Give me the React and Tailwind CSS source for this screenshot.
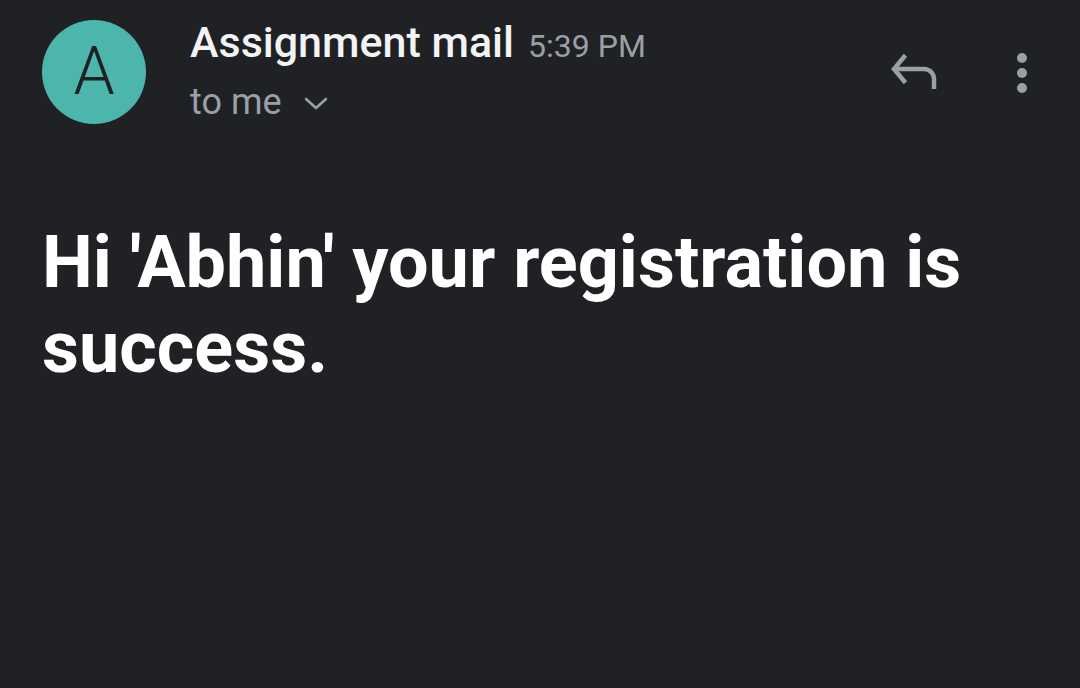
export default function App() {
  return (
    <div className="w-[1080px] h-[688px] bg-[#202124] overflow-hidden" style={{ fontFamily: 'Roboto, "Noto Sans", sans-serif' }}>
      <div className="flex items-start pl-[42px] pr-[53px] pt-[20px]">
        <div className="w-[104px] h-[104px] rounded-full bg-[#4db6ac] flex items-center justify-center shrink-0">
          <span className="text-[#202124] text-[66px] leading-none font-light">A</span>
        </div>
        <div className="ml-[44px] flex-1">
          <div className="flex items-baseline -mt-[2px]">
            <span className="text-[#f1f3f4] text-[43px] leading-[48px] font-medium">Assignment mail</span>
            <span className="text-[#9aa0a6] text-[32px] ml-[14px]">5:39 PM</span>
          </div>
          <div className="flex items-center mt-[12px]">
            <span className="text-[#9aa0a6] text-[36px] leading-[40px]">to me</span>
            <svg width="24" height="14" viewBox="0 0 24 14" className="ml-[22px] mt-[4px]">
              <path d="M2 2l10 9 10-9" fill="none" stroke="#9aa0a6" strokeWidth="2.6" strokeLinecap="round" strokeLinejoin="round" />
            </svg>
          </div>
        </div>
        <div className="flex items-center mt-[31px]">
          <svg width="52" height="44" viewBox="0 0 52 44">
            <path d="M14 6L4 18l10 12" fill="none" stroke="#9aa0a6" strokeWidth="4.5" strokeLinecap="square" strokeLinejoin="miter" />
            <path d="M4 18h30a10 10 0 0 1 10 10v10" fill="none" stroke="#9aa0a6" strokeWidth="4.5" />
          </svg>
          <div className="ml-[75px] flex flex-col gap-[5px]">
            <div className="w-[10px] h-[10px] rounded-full bg-[#9aa0a6]" />
            <div className="w-[10px] h-[10px] rounded-full bg-[#9aa0a6]" />
            <div className="w-[10px] h-[10px] rounded-full bg-[#9aa0a6]" />
          </div>
        </div>
      </div>
      <div className="pl-[42px] pr-[60px] mt-[96px]">
        <p className="text-white font-bold text-[72px] leading-[85px]">Hi 'Abhin' your registration is success.</p>
      </div>
    </div>
  );
}
